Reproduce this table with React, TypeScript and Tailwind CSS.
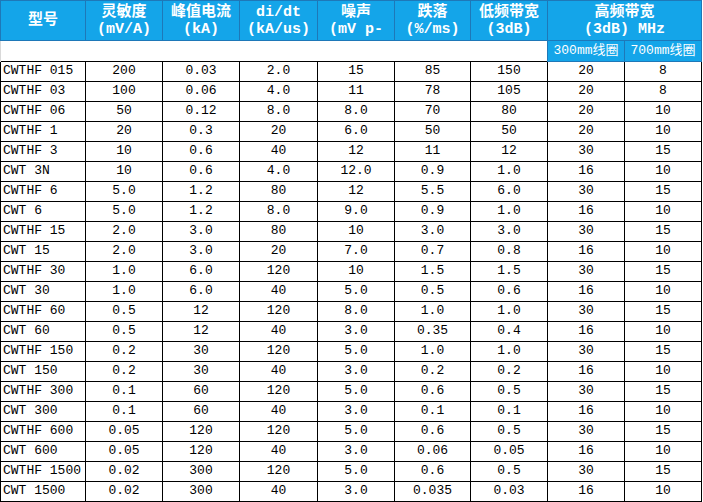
const rows: string[][] = [
  ["CWTHF 015", "200", "0.03", "2.0", "15", "85", "150", "20", "8"],
  ["CWTHF 03", "100", "0.06", "4.0", "11", "78", "105", "20", "8"],
  ["CWTHF 06", "50", "0.12", "8.0", "8.0", "70", "80", "20", "10"],
  ["CWTHF 1", "20", "0.3", "20", "6.0", "50", "50", "20", "10"],
  ["CWTHF 3", "10", "0.6", "40", "12", "11", "12", "30", "15"],
  ["CWT 3N", "10", "0.6", "4.0", "12.0", "0.9", "1.0", "16", "10"],
  ["CWTHF 6", "5.0", "1.2", "80", "12", "5.5", "6.0", "30", "15"],
  ["CWT 6", "5.0", "1.2", "8.0", "9.0", "0.9", "1.0", "16", "10"],
  ["CWTHF 15", "2.0", "3.0", "80", "10", "3.0", "3.0", "30", "15"],
  ["CWT 15", "2.0", "3.0", "20", "7.0", "0.7", "0.8", "16", "10"],
  ["CWTHF 30", "1.0", "6.0", "120", "10", "1.5", "1.5", "30", "15"],
  ["CWT 30", "1.0", "6.0", "40", "5.0", "0.5", "0.6", "16", "10"],
  ["CWTHF 60", "0.5", "12", "120", "8.0", "1.0", "1.0", "30", "15"],
  ["CWT 60", "0.5", "12", "40", "3.0", "0.35", "0.4", "16", "10"],
  ["CWTHF 150", "0.2", "30", "120", "5.0", "1.0", "1.0", "30", "15"],
  ["CWT 150", "0.2", "30", "40", "3.0", "0.2", "0.2", "16", "10"],
  ["CWTHF 300", "0.1", "60", "120", "5.0", "0.6", "0.5", "30", "15"],
  ["CWT 300", "0.1", "60", "40", "3.0", "0.1", "0.1", "16", "10"],
  ["CWTHF 600", "0.05", "120", "120", "5.0", "0.6", "0.5", "30", "15"],
  ["CWT 600", "0.05", "120", "40", "3.0", "0.06", "0.05", "16", "10"],
  ["CWTHF 1500", "0.02", "300", "120", "5.0", "0.6", "0.5", "30", "15"],
  ["CWT 1500", "0.02", "300", "40", "3.0", "0.035", "0.03", "16", "10"],
];

const headers: [string, string][] = [
  ["灵敏度", "(mV/A)"],
  ["峰值电流", "(kA)"],
  ["di/dt", "(kA/us)"],
  ["噪声", "(mV p-"],
  ["跌落", "(%/ms)"],
  ["低频带宽", "(3dB)"],
];

const widths = [85, 77, 77, 78, 77, 76, 77, 77, 77];

export default function App() {
  return (
    <div className="w-[703px] h-[502px] bg-white overflow-hidden font-['Liberation_Mono','Noto_Sans_CJK_SC',monospace] text-[13px] text-black">
      <table className="table-fixed border-collapse w-[702px]">
        <colgroup>
          {widths.map((w, i) => (
            <col key={i} style={{ width: w }} />
          ))}
        </colgroup>
        <thead>
          <tr className="h-[40px] bg-[#14a5e9] text-white font-bold text-[15px] leading-[17px]">
            <th className="border border-[#1e78b8] font-bold">型号</th>
            {headers.map(([a, b]) => (
              <th key={a} className="border border-[#1e78b8] font-bold whitespace-nowrap">
                <div>{a}</div>
                <div>{b}</div>
              </th>
            ))}
            <th colSpan={2} className="border border-[#1e78b8] font-bold">
              <div>高频带宽</div>
              <div>(3dB) MHz</div>
            </th>
          </tr>
          <tr className="h-[20px]">
            <td colSpan={7} className="bg-white border-l border-[#d9d9d9]" />
            <td className="bg-[#14a5e9] text-white text-[13px] text-center border border-[#1e78b8] whitespace-nowrap">300mm线圈</td>
            <td className="bg-[#14a5e9] text-white text-[13px] text-center border border-[#1e78b8] whitespace-nowrap">700mm线圈</td>
          </tr>
        </thead>
        <tbody>
          {rows.map((r) => (
            <tr key={r[0]} className="h-[20px]">
              {r.map((c, i) => (
                <td
                  key={i}
                  className={`border border-black leading-[18px] p-0 whitespace-nowrap ${i === 0 ? "text-left pl-[2px]" : "text-center"}`}
                >
                  {c}
                </td>
              ))}
            </tr>
          ))}
        </tbody>
      </table>
    </div>
  );
}
